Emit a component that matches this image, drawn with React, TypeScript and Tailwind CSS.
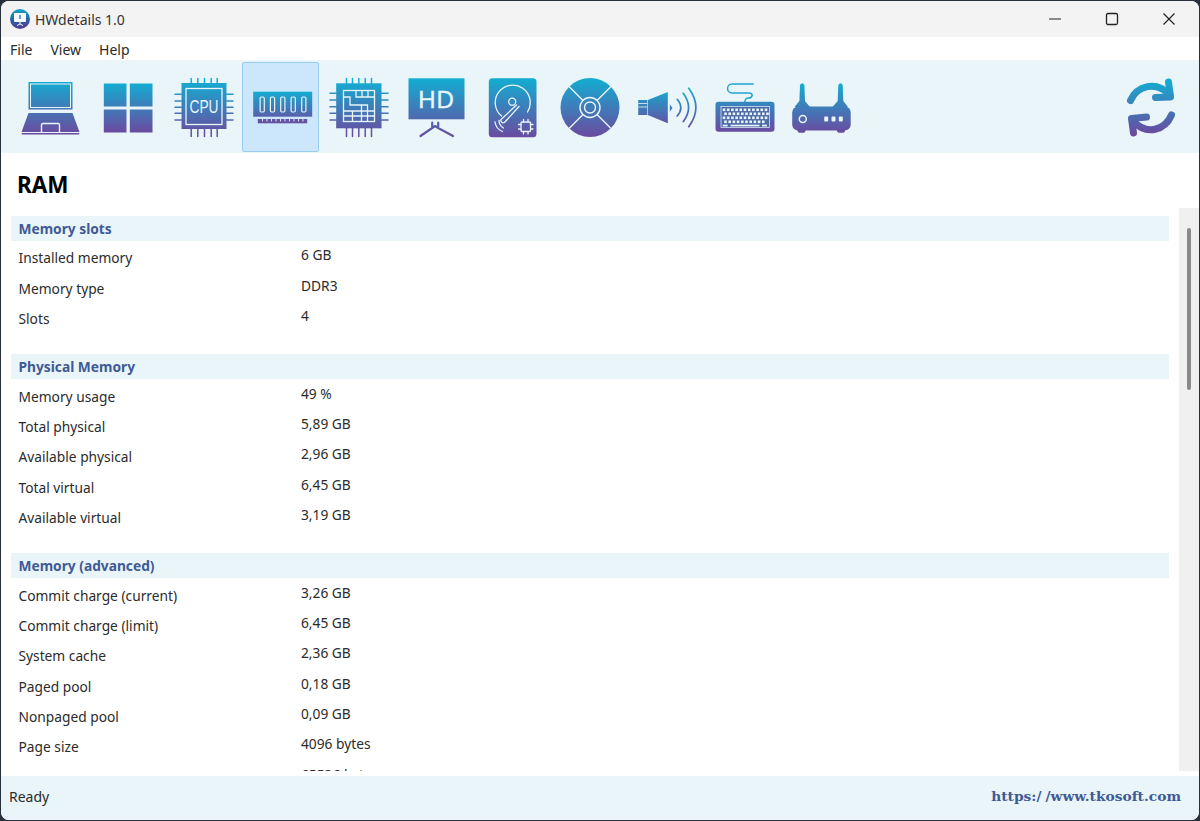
import React from "react";

const BG = "#e9f5f8";

function Grad({ id, y1, y2 }: { id: string; y1: number; y2: number }) {
  return (
    <defs>
      <linearGradient id={id} gradientUnits="userSpaceOnUse" x1="0" x2="0" y1={y1} y2={y2}>
        <stop offset="0" stopColor="#12aed2" />
        <stop offset="1" stopColor="#6b4a9f" />
      </linearGradient>
    </defs>
  );
}

function Icon({ i, y1 = 80, y2 = 136, children }: { i: number; y1?: number; y2?: number; children: React.ReactNode }) {
  const id = "g" + i;
  const x = 11 + 77 * i + 38.5 - 32;
  return (
    <svg width="64" height="64" viewBox={`${x} 75 64 64`} fill={`url(#${id})`} className="block">
      <Grad id={id} y1={y1} y2={y2} />
      {children}
    </svg>
  );
}

const lines = (id: string, arr: number[][], w = 1.5) =>
  arr.map((a, k) => <line key={k} x1={a[0]} y1={a[1]} x2={a[2]} y2={a[3]} stroke={`url(#${id})`} strokeWidth={w} strokeLinecap="round" />);

function chipPins(id: string, xs: number[], ys: number[], l: number, r: number, t: number, b: number, tp: number, bp: number, lp: number, rp: number) {
  const a: number[][] = [];
  xs.forEach((x) => {
    a.push([x, tp, x, t]);
    a.push([x, b, x, bp]);
  });
  ys.forEach((y) => {
    a.push([lp, y, l, y]);
    a.push([r, y, rp, y]);
  });
  return lines(id, a);
}

const tools: React.ReactNode[] = [
  <Icon i={0} y1={80} y2={134} key="laptop">
    <rect x="28" y="82" width="44" height="27.5" />
    <rect x="30" y="84" width="40" height="23.5" fill="none" stroke={BG} strokeWidth="1" />
    <path d="M28 113 H72 L79 132 H21 Z" />
    <path d="M41 132 V125 Q41 123.500 42.500 123.500 H57.500 Q59 123.500 59 125 V132" fill="none" stroke={BG} strokeWidth="1.400" />
    <rect x="21" y="133" width="58" height="1.500" rx="0.700" />
  </Icon>,
  <Icon i={1} y1={82} y2={133} key="win">
    <rect x="103.300" y="83.500" width="22.700" height="23" />
    <rect x="129.300" y="83.500" width="22.700" height="23" />
    <rect x="103.300" y="109.500" width="22.700" height="23" />
    <rect x="129.300" y="109.500" width="22.700" height="23" />
  </Icon>,
  <Icon i={2} y1={80} y2={136} key="cpu">
    {chipPins("g2", [190.700, 197.300, 204, 210.700, 216.700], [94.300, 101, 107.300, 113.300, 120], 181, 226, 83, 129, 78.500, 136.500, 174.500, 232.500)}
    <rect x="181" y="83" width="45" height="46" />
    <rect x="185.500" y="88.500" width="36" height="36" fill="none" stroke={BG} strokeWidth="1.300" />
    <text x="189" y="113" textLength="29" lengthAdjust="spacingAndGlyphs" fontSize="18" fontFamily="'Liberation Sans', sans-serif" fill={BG}>CPU</text>
  </Icon>,
  <Icon i={3} y1={91} y2={124} key="ram">
    <rect x="252.700" y="91.700" width="59" height="25" />
    {[261.700, 272, 282.300, 292.700, 303.300].map((x) => (
      <rect key={x} x={x - 2.100} y="97" width="4.200" height="15" rx="1.200" fill="none" stroke={BG} strokeWidth="1.200" />
    ))}
    <rect x="257.300" y="119" width="49.400" height="4.300" />
    {[261.500, 266, 270.500, 275, 279.500, 284, 288.500, 293, 297.500, 302].map((x) => (
      <rect key={x} x={x} y="119" width="0.900" height="2.400" fill={BG} />
    ))}
  </Icon>,
  <Icon i={4} y1={80} y2={136} key="mem">
    {chipPins("g4", [346, 352, 358.300, 364.700, 371], [93.300, 100, 106.700, 113.300, 120], 335.700, 381, 83.300, 128.300, 78.500, 136.500, 329.500, 387.500)}
    <rect x="335.700" y="83.300" width="45.300" height="45" />
    <g fill="none" stroke={BG} strokeWidth="1.300">
      <rect x="343" y="90.500" width="31" height="31" />
      <path d="M355.500 90.500 V97 H374 M361.500 90.500 V97 M367.500 90.500 V97" />
      <path d="M343 97 H349.500 V105 H367 V111 H343 M352 111 V121.500 M361 105 V121.500 M367 105 V121.500 M343 116 H374 M367 111 H374" />
    </g>
  </Icon>,
  <Icon i={5} y1={78} y2={138} key="hd">
    <rect x="408" y="78.300" width="56" height="41" />
    <text x="436" y="108" textAnchor="middle" fontSize="24" letterSpacing="1" stroke={BG} strokeWidth="0.300" fontFamily="'Liberation Sans', sans-serif" fill={BG}>HD</text>
    <path d="M431.700 122.700 V128 L420 136 M437.700 122.700 V128 L452.500 136 M431.700 128 L434.700 126 L437.700 128" fill="none" stroke="url(#g5)" strokeWidth="2.200" strokeLinecap="round" strokeLinejoin="round" />
  </Icon>,
  <Icon i={6} y1={78} y2={138} key="hdd">
    <rect x="488.300" y="78.300" width="47.700" height="59" rx="3.500" />
    <g fill="none" stroke={BG} strokeWidth="1.300" strokeLinecap="round">
      <path d="M501 116 A17.500 17.500 0 1 1 527 112" />
      <circle cx="511.700" cy="101.700" r="3.500" />
      <path d="M518.500 106.500 L504 122.500 A2.500 2.500 0 0 1 500.500 119.500 L516 105" />
      <path d="M494.500 122 A12 12 0 0 0 502 131.500 M498.500 120.500 A9 9 0 0 0 503 128" />
      <rect x="520.500" y="122" width="9.500" height="9.500" rx="1" />
      <path d="M523 119.500 V122 M527.500 119.500 V122 M523 131.500 V134 M527.500 131.500 V134 M518 124.500 H520.500 M518 129 H520.500 M530 124.500 H532.500 M530 129 H532.500" />
    </g>
  </Icon>,
  <Icon i={7} y1={78} y2={137} key="cd">
    <circle cx="589.500" cy="107.500" r="29.500" />
    <g fill="none" stroke={BG} strokeWidth="1.400">
      <circle cx="589.500" cy="107.500" r="10" />
      <circle cx="589.500" cy="107.500" r="5.500" />
      <path d="M582.500 100.500 L568.500 86.500 M596.500 100.500 L610.500 86.500 M582.500 114.500 L568.500 128.500 M596.500 114.500 L610.500 128.500" />
    </g>
  </Icon>,
  <Icon i={8} y1={88} y2={127} key="spk">
    <rect x="637.700" y="100" width="9" height="15" />
    <path d="M637.700 103.500 H646.700 M637.700 107 H646.700" stroke={BG} strokeWidth="0.800" />
    <path d="M647.300 100 L667.300 92 V123.300 L647.300 115 Z" />
    <path d="M669.300 104.300 L672 108 L669.300 111.700 Z" />
    <path d="M676.700 99.300 Q684 107.700 676.700 116 M682.700 93.300 Q693.500 107.700 682.700 121.700 M688.300 88.300 Q702.500 107.700 688.300 126.700" fill="none" stroke="url(#g8)" strokeWidth="1.700" strokeLinecap="round" />
  </Icon>,
  <Icon i={9} y1={84} y2={132} key="kbd">
    <path d="M752.700 84 H731.700 C725.500 84 725.500 93 731.700 93 H748.500 C753.500 93 752 98 748 98 C745.500 98 744.500 100 744.300 102" fill="none" stroke="#1ea6cf" strokeWidth="1.500" strokeLinecap="round" />
    <rect x="715" y="101.700" width="59" height="30" rx="3" />
    <rect x="720.500" y="106.500" width="48.500" height="21" fill="#4d6aa9" stroke={BG} strokeWidth="0.700" />
    {[108.500, 112.500, 116.500, 120.500].map((y, r) =>
      Array.from({ length: r === 3 ? 10 : 11 }).map((_, c) => (
        <rect key={`${r}-${c}`} x={722.200 + c * 4.200 + (r % 2) * 1.500} y={y} width="2.600" height="2.600" fill={BG} />
      ))
    )}
    <rect x="730" y="124.700" width="29" height="1.700" fill={BG} />
    <rect x="722.200" y="124.700" width="5" height="1.700" fill={BG} />
    <rect x="761.500" y="124.700" width="5" height="1.700" fill={BG} />
  </Icon>,
  <Icon i={10} y1={83} y2={133} key="rtr">
    <path d="M799.500 85 Q801.700 81.500 803.900 85 L804.500 101 L809.500 107 H794 L798.900 101 Z" />
    <path d="M837.800 85 Q840 81.500 842.200 85 L842.800 101 L847.500 107 H832 L837.200 101 Z" />
    <rect x="791.700" y="106.500" width="58.500" height="24" rx="6" />
    <rect x="797" y="128" width="8" height="4.700" rx="2" />
    <rect x="836.500" y="128" width="8" height="4.700" rx="2" />
    <circle cx="802.300" cy="119" r="3.500" fill="none" stroke={BG} strokeWidth="1.500" />
    {[825.700, 833, 840.300].map((x) => (
      <rect key={x} x={x - 2} y="116.500" width="4" height="5" rx="1" fill={BG} />
    ))}
  </Icon>,
];

type Row = [string, string];
const sections: { title: string; rows: Row[] }[] = [
  {
    title: "Memory slots",
    rows: [
      ["Installed memory", "6 GB"],
      ["Memory type", "DDR3"],
      ["Slots", "4"],
    ],
  },
  {
    title: "Physical Memory",
    rows: [
      ["Memory usage", "49 %"],
      ["Total physical", "5,89 GB"],
      ["Available physical", "2,96 GB"],
      ["Total virtual", "6,45 GB"],
      ["Available virtual", "3,19 GB"],
    ],
  },
  {
    title: "Memory (advanced)",
    rows: [
      ["Commit charge (current)", "3,26 GB"],
      ["Commit charge (limit)", "6,45 GB"],
      ["System cache", "2,36 GB"],
      ["Paged pool", "0,18 GB"],
      ["Nonpaged pool", "0,09 GB"],
      ["Page size", "4096 bytes"],
      ["Allocation granularity", "65536 bytes"],
    ],
  },
];

export default function App() {
  return (
    <div className="w-[1200px] h-[821px] bg-[#27303b] overflow-hidden pt-px pl-px pr-px pb-[1.500px]">
      <div className="h-full flex flex-col rounded-[8px] overflow-hidden bg-white text-[#2b2b2b] font-['Noto_Sans','Open_Sans',sans-serif] text-[13.750px]">
        {/* title bar */}
        <div className="h-9 shrink-0 bg-[#f3f3f3] flex items-center">
          <svg width="22" height="22" viewBox="0 0 22 22" className="ml-[7.500px] block">
            <defs>
              <linearGradient id="app" x1="0" x2="0" y1="0" y2="1">
                <stop offset="0" stopColor="#14a3cc" />
                <stop offset="0.600" stopColor="#2f5aa0" />
                <stop offset="1" stopColor="#55398e" />
              </linearGradient>
            </defs>
            <circle cx="11" cy="11" r="10" fill="url(#app)" />
            <rect x="5" y="5" width="12" height="9" rx="0.800" fill="#f2f8fb" />
            <rect x="10.300" y="7" width="1.400" height="4" fill="#3b78b5" />
            <path d="M11 14 V16 M8 17.500 L11 16 L14 17.500" stroke="#f2f8fb" strokeWidth="1" fill="none" />
          </svg>
          <span className="ml-[4.500px] text-[14px] text-[#333]">HWdetails 1.0</span>
          <div className="ml-auto flex items-center pr-[1.500px]">
            <div className="w-[57px] flex justify-center">
              <svg width="14" height="14" viewBox="0 0 14 14" className="block">
                <path d="M1 7 H13" stroke="#222" strokeWidth="1.200" />
              </svg>
            </div>
            <div className="w-[57px] flex justify-center">
              <svg width="14" height="14" viewBox="0 0 14 14" className="block">
                <rect x="1.500" y="1.500" width="11" height="11" rx="1.500" fill="none" stroke="#222" strokeWidth="1.300" />
              </svg>
            </div>
            <div className="w-[57px] flex justify-center">
              <svg width="14" height="14" viewBox="0 0 14 14" className="block">
                <path d="M1.500 1.500 L12.500 12.500 M12.500 1.500 L1.500 12.500" stroke="#222" strokeWidth="1.200" />
              </svg>
            </div>
          </div>
        </div>
        {/* menu */}
        <div className="h-[23px] shrink-0 flex items-center bg-white pl-[9px] pt-[2px] gap-[18px] text-[14px] text-[#2b2b2b]">
          <span>File</span>
          <span>View</span>
          <span>Help</span>
        </div>
        {/* toolbar */}
        <div className="h-[93px] shrink-0 bg-[#e9f5f8] flex items-center pl-[10px] pr-[16px]">
          {tools.map((t, k) => (
            <div
              key={k}
              className={
                "w-[77px] h-[90px] mt-[1px] shrink-0 flex items-center justify-center rounded-[2px] border " +
                (k === 3 ? "bg-[#cce6fb] border-[#99cdee]" : "border-transparent")
              }
            >
              {t}
            </div>
          ))}
          <div className="ml-auto mt-[1px]">
            <svg width="64" height="64" viewBox="1119 75 64 64" className="block">
              <Grad id="gr" y1={80} y2={134} />
              <g fill="none" stroke="url(#gr)" strokeWidth="7" strokeLinecap="round" strokeLinejoin="round">
                <path d="M1130.500 100.500 C1137 86 1156 80 1170 95" />
                <path d="M1168.500 82 L1170.500 97 L1155.500 97.500" />
                <path d="M1171.500 115 C1165 130 1147 136 1133 121" />
                <path d="M1133.500 133 L1131.500 118.500 L1146.500 117" />
              </g>
            </svg>
          </div>
        </div>
        {/* main */}
        <div className="flex-1 min-h-0 flex flex-col pb-[5px]">
          <h1 className="h-[55px] shrink-0 flex items-center pl-4 pt-[9px] text-[22.500px] font-bold text-black leading-none">RAM</h1>
          <div className="flex-1 min-h-0 flex">
            <div className="flex-1 min-w-0 overflow-hidden pl-[10px] pr-[10px] pt-2">
              {sections.map((s) => (
                <div key={s.title} className="mb-5">
                  <div className="h-[25px] mb-[2px] bg-[#e9f5f8] flex items-center pl-[7.500px] pt-px font-bold text-[#3f5a96]">{s.title}</div>
                  {s.rows.map((r) => (
                    <div key={r[0]} className="h-[30.400px] flex items-center pl-[7.500px] pt-px">
                      <span className="w-[282.500px] shrink-0">{r[0]}</span>
                      <span className="pb-[6px]">{r[1]}</span>
                    </div>
                  ))}
                </div>
              ))}
            </div>
            <div className="w-5 shrink-0 bg-[#f0f0f0] pt-5 pl-2">
              <div className="w-1 h-[162px] rounded-full bg-[#8a8a8a]" />
            </div>
          </div>
        </div>
        {/* status */}
        <div className="h-[44px] shrink-0 bg-[#e9f5f8] flex items-center justify-between pl-2 pr-[18px] pb-[3px]">
          <span className="text-[14px]">Ready</span>
          <span className="font-['DejaVu_Serif',serif] font-bold text-[13.800px] text-[#3f5a96]">
            https:/<span className="ml-[4px]">/</span>www.tkosoft.com
          </span>
        </div>
      </div>
    </div>
  );
}
